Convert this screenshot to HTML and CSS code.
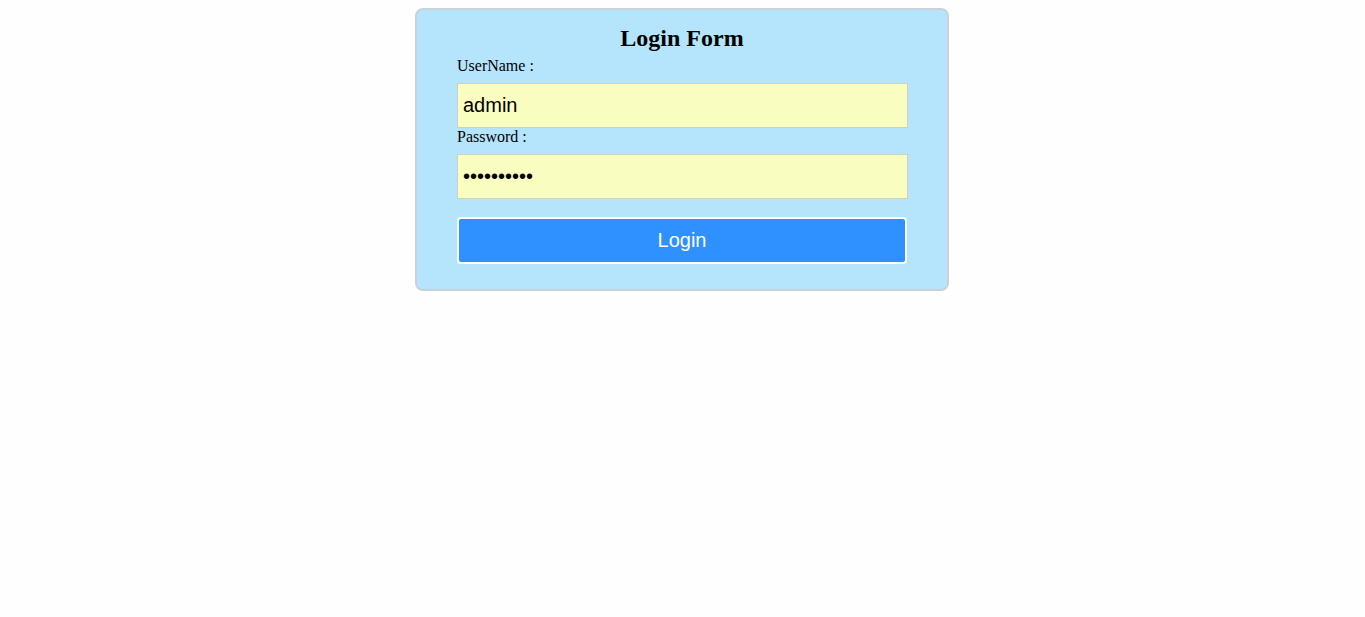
FILE: index.html
```html
<!DOCTYPE html>
<html>
<head>
<meta charset="utf-8">
<title>Login Form</title>
<link rel="stylesheet" href="styles.css">
</head>
<body>
<form class="card">
  <h2 class="title">Login Form</h2>
  <label class="label" for="user">UserName :</label>
  <input class="field" id="user" type="text" value="admin">
  <label class="label" for="pass">Password :</label>
  <input class="field" id="pass" type="password" value="adminpass1">
  <button class="btn" type="button">Login</button>
</form>
</body>
</html>
```

FILE: styles.css
```css
body {
  margin: 8px 9px 8px 8px;
  background: #fefefe;
  font-family: "Liberation Serif", "Times New Roman", serif;
}

.card {
  box-sizing: content-box;
  width: 450px;
  margin: 0 auto;
  padding: 14px 40px 25px;
  background: #b5e5fd;
  border: 2px solid #c8d2da;
  border-radius: 8px;
  display: flex;
  flex-direction: column;
}

.title {
  margin: 0;
  font-size: 24px;
  line-height: 28px;
  font-weight: bold;
  text-align: center;
  color: #000;
}

.label {
  display: block;
  margin-top: 5px;
  font-size: 16px;
  line-height: 18px;
  color: #000;
}

.field + .label {
  margin-top: 0;
}

.field {
  box-sizing: border-box;
  width: 451px;
  height: 45px;
  margin: 8px 0 0;
  padding: 0 5px;
  border: 1px solid #cfcfc0;
  background: #f9fdc0;
  font-family: "Liberation Sans", Arial, sans-serif;
  font-size: 20px;
  color: #000;
  outline: none;
}

.btn {
  box-sizing: border-box;
  width: 450px;
  height: 47px;
  margin-top: 18px;
  border: 2px solid #ffffff;
  border-radius: 4px;
  background: #2f90ff;
  color: #ffffff;
  font-family: "Liberation Sans", Arial, sans-serif;
  font-size: 20px;
  cursor: pointer;
}
```
